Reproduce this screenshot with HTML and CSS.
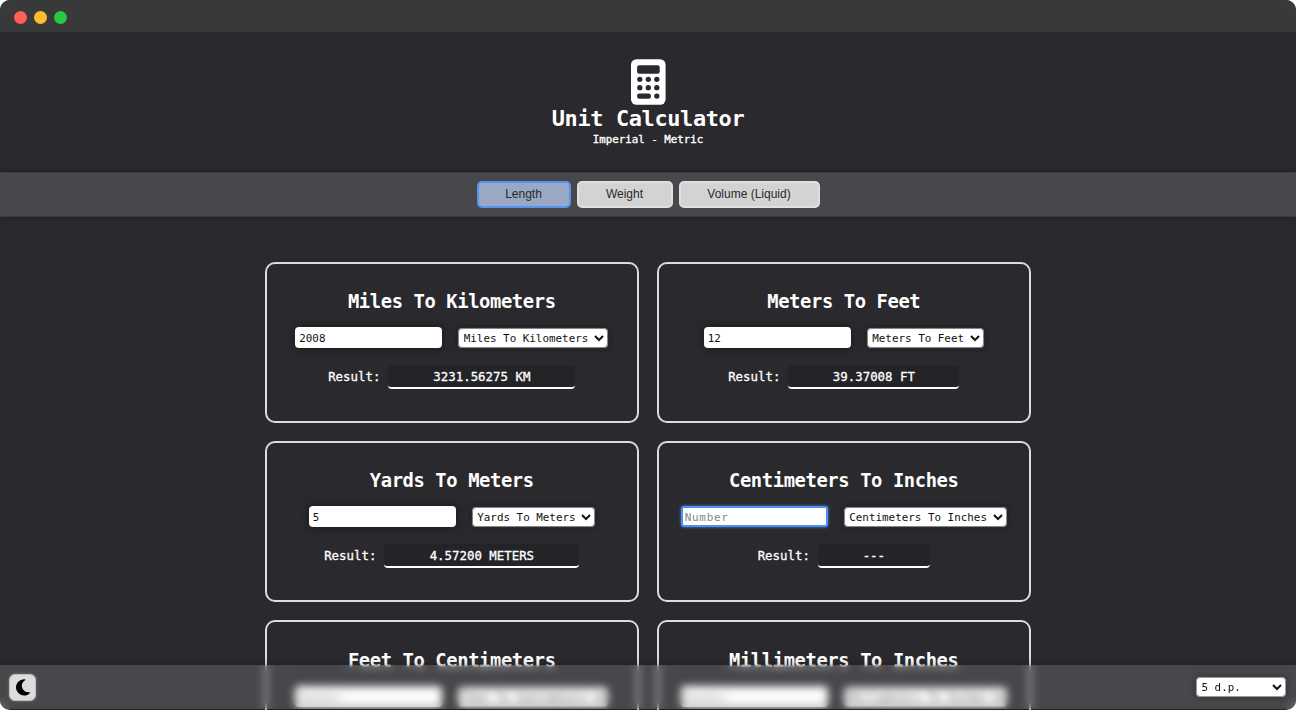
FILE: index.html
```html
<!DOCTYPE html>
<html lang="en">
<head>
<meta charset="utf-8">
<title>Unit Calculator</title>
<link rel="stylesheet" href="styles.css">
</head>
<body>
<div class="window">
  <div class="titlebar"><span class="dot red"></span><span class="dot yellow"></span><span class="dot green"></span></div>
  <header class="header">
    <svg class="logo" viewBox="0 0 35 46" width="35" height="46">
      <rect x="0" y="0.2" width="34.6" height="45.6" rx="5.5" fill="#fff"/>
      <g fill="#2a292e">
        <rect x="6.1" y="6.3" width="22.6" height="8.4" rx="2.2"/>
        <circle cx="8.8" cy="20.3" r="2.65"/><circle cx="17.3" cy="20.3" r="2.65"/><circle cx="25.8" cy="20.3" r="2.65"/>
        <circle cx="8.8" cy="28.7" r="2.65"/><circle cx="17.3" cy="28.7" r="2.65"/><circle cx="25.8" cy="28.7" r="2.65"/>
        <rect x="6.1" y="34.4" width="13.8" height="5.3" rx="2.2"/><circle cx="25.8" cy="37.1" r="2.65"/>
      </g>
    </svg>
    <h1 class="title">Unit Calculator</h1>
    <p class="subtitle">Imperial - Metric</p>
  </header>
  <nav class="nav">
    <button class="tab tab-length active">Length</button>
    <button class="tab tab-weight">Weight</button>
    <button class="tab tab-volume">Volume (Liquid)</button>
  </nav>
  <main class="grid">
    <section class="card">
      <h2>Miles To Kilometers</h2>
      <div class="row"><input class="number" value="2008" placeholder="Number"><select class="unit" style="width:150px"><option>Miles To Kilometers</option></select></div>
      <div class="result"><span>Result:</span><output style="width:187px">3231.56275 KM</output></div>
    </section>
    <section class="card">
      <h2>Meters To Feet</h2>
      <div class="row"><input class="number" value="12" placeholder="Number"><select class="unit" style="width:117px"><option>Meters To Feet</option></select></div>
      <div class="result"><span>Result:</span><output style="width:171px">39.37008 FT</output></div>
    </section>
    <section class="card">
      <h2>Yards To Meters</h2>
      <div class="row"><input class="number" value="5" placeholder="Number"><select class="unit" style="width:123px"><option>Yards To Meters</option></select></div>
      <div class="result"><span>Result:</span><output style="width:195px">4.57200 METERS</output></div>
    </section>
    <section class="card">
      <h2>Centimeters To Inches</h2>
      <div class="row"><input class="number focused" placeholder="Number"><select class="unit" style="width:163px"><option>Centimeters To Inches</option></select></div>
      <div class="result"><span>Result:</span><output style="width:112px">---</output></div>
    </section>
    <section class="card">
      <h2>Feet To Centimeters</h2>
      <div class="row"><input class="number" placeholder="Number"><select class="unit" style="width:150px"><option>Feet To Centimeters</option></select></div>
    </section>
    <section class="card">
      <h2>Millimeters To Inches</h2>
      <div class="row"><input class="number" placeholder="Number"><select class="unit" style="width:163px"><option>Millimeters To Inches</option></select></div>
    </section>
  </main>
  <footer class="footer">
    <button class="theme" aria-label="Toggle theme">
      <svg viewBox="0 0 384 512" width="14" height="18.6"><path d="M223.500 32C100 32 0 132.300 0 256S100 480 223.500 480c60.600 0 115.500-24.200 155.800-63.400c5-4.900 6.300-12.500 3.100-18.700s-10.100-9.700-17-8.500c-9.800 1.700-19.800 2.600-30.100 2.600c-96.900 0-175.500-78.800-175.500-176c0-65.800 36-123.100 89.300-153.300c6.100-3.500 9.200-10.500 7.700-17.300s-7.300-11.900-14.300-12.500c-6.300-.5-12.600-.8-19-.8z" fill="#000"/></svg>
    </button>
    <select class="unit precision"><option>5 d.p.</option></select>
  </footer>
</div>
</body>
</html>
```
FILE: styles.css
```css
* { box-sizing: border-box; }
body { margin: 0; background: #fff; overflow: hidden; font-family: "DejaVu Sans Mono", monospace; }
.window { position: relative; height: 710px; overflow: hidden; border-radius: 10px; background: #2a292e; color: #fff; display: flex; flex-direction: column; }
.titlebar { flex: none; height: 32px; background: #383a3a; display: flex; align-items: center; gap: 7px; padding: 2px 0 0 13.5px; }
.dot { width: 13px; height: 13px; border-radius: 50%; }
.red { background: #ff5f57; }
.yellow { background: #febc2e; }
.green { background: #28c840; }
.header { flex: none; height: 140px; padding-top: 27px; display: flex; flex-direction: column; align-items: center; }
.logo { flex: none; display: block; }
.title { margin: 0; font-size: 21.9px; letter-spacing: -0.35px; line-height: 28px; font-weight: 700; }
.subtitle { margin: 0; font-size: 10.8px; line-height: 13px; -webkit-text-stroke: 0.35px #fff; }
.nav { flex: none; height: 45px; background: #48474b; border: solid #3b3a3f; border-width: 1px 0; box-shadow: 0 0 8px rgba(0, 0, 0, 0.3); display: flex; justify-content: center; align-items: center; gap: 6px; }
.tab { height: 27px; padding: 0 0 1px; border: 2px solid #e0e0e0; border-radius: 5px; background: #d3d3d3; color: #2a2a2a; font: 12px "Liberation Sans", Arial, sans-serif; }
.tab-length { width: 94px; }
.tab-weight { width: 96px; }
.tab-volume { width: 141px; }
.tab.active { background: #99a8c4; border-color: #5594f5; }
.grid { flex: none; display: grid; grid-template-columns: 374px 374px; grid-auto-rows: 161.3px; gap: 18px; justify-content: center; padding: 44.7px 0.5px 0 0; }
.card { border: 2px solid #dcdcdc; border-radius: 10px; padding-top: 25.5px; }
.card h2 { margin: 0 0 12px; text-align: center; font-size: 18.8px; letter-spacing: -0.38px; line-height: 26px; font-weight: 700; }
.card:nth-child(n+5) h2 { padding-top: 0.5px; }
.row { display: flex; justify-content: center; align-items: center; gap: 16px; height: 21px; }
.number { width: 147px; height: 21px; padding: 2px 4px 0; border: 0; border-radius: 4px; background: #fff; color: #111; font: 10.9px "DejaVu Sans Mono", monospace; box-shadow: 0 0 8px rgba(0, 0, 0, 0.5); outline: none; }
.number::placeholder { color: #858585; letter-spacing: 0.75px; }
.number.focused { border: 2px solid #4d8ff5; padding: 2px 2px 0; border-radius: 3px; box-shadow: 0 0 3px #4d8ff5; }
.unit { height: 20px; padding: 1px 0 0 0.5px; border: 1.5px solid #858585; border-radius: 4px; background: #fff; color: #111; font: 10.9px "DejaVu Sans Mono", monospace; box-shadow: 0 0 1px #858585, 0 0 6px rgba(0, 0, 0, 0.45); }
.result { display: flex; justify-content: center; align-items: center; gap: 8px; margin-top: 16.7px; height: 24px; line-height: 23px; font-size: 12.4px; -webkit-text-stroke: 0.3px #fff; }
.result span { height: 24px; }
.result output { height: 24px; border-bottom: 2px solid #fff; border-radius: 4px; background: #242328; text-align: center; }
.footer { position: absolute; left: 0; right: 0; bottom: 1px; height: 44px; padding: 0 10px 0 9px; display: flex; align-items: center; justify-content: space-between; background: rgba(235, 235, 235, 0.155); backdrop-filter: blur(4px); box-shadow: 0 0 8px rgba(0, 0, 0, 0.3); }
.theme { width: 27px; height: 27px; padding: 0; display: flex; align-items: center; justify-content: center; border: 1px solid #bbb; border-radius: 6px; background: #dcdcdc; box-shadow: 0 0 3px rgba(255, 255, 255, 0.3); }
.precision { width: 90px; border-color: #999; }
```
